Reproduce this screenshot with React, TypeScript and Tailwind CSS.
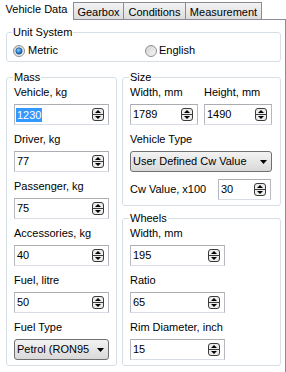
import React from "react";

const Spin = () => (
  <svg width="12" height="13" viewBox="0 0 12 13" className="shrink-0">
    <rect x="0.5" y="0.5" width="11" height="12" rx="2.5" fill="#ececec" stroke="#3a3a3a" />
    <line x1="0.5" y1="6.5" x2="11.5" y2="6.5" stroke="#3a3a3a" />
    <path d="M3 5 L9 5 L6 2 Z" fill="#000" />
    <path d="M3 8 L9 8 L6 11 Z" fill="#000" />
  </svg>
);

const Arrow = () => (
  <svg width="7" height="4" viewBox="0 0 7 4" className="shrink-0">
    <path d="M0 0 L7 0 L3.5 4 Z" fill="#000" />
  </svg>
);

const Radio = ({ checked, id }: { checked: boolean; id: string }) => (
  <svg width="12" height="12" viewBox="0 0 12 12" className="shrink-0">
    <defs>
      <linearGradient id={`g${id}`} x1="0" y1="0" x2="1" y2="1">
        <stop offset="0" stopColor="#cfcfcf" />
        <stop offset="1" stopColor="#fafafa" />
      </linearGradient>
      <radialGradient id={`b${id}`} cx="0.4" cy="0.35" r="0.7">
        <stop offset="0" stopColor="#8fd0ff" />
        <stop offset="0.6" stopColor="#2a84d8" />
        <stop offset="1" stopColor="#0c4f9a" />
      </radialGradient>
    </defs>
    <circle cx="6" cy="6" r="5.5" fill={`url(#g${id})`} stroke="#8e8f8f" />
    {checked && <circle cx="6" cy="6" r="3.2" fill={`url(#b${id})`} stroke="#1c4d80" strokeWidth="0.6" />}
  </svg>
);

const SpinBox = ({ value, w, selected }: { value: string; w: string; selected?: boolean }) => (
  <div
    className={`${w} h-[21px] flex items-center justify-between border border-[#b5b8bf] border-t-[#abadb3] border-b-[#d8dde5] bg-white pl-[1px] pr-[4px]`}
  >
    {selected ? (
      <span className="bg-[#3399ff] text-white px-[1px] leading-[14px]">{value}</span>
    ) : (
      <span className="px-[1px]">{value}</span>
    )}
    <Spin />
  </div>
);

const Combo = ({ value, w }: { value: string; w: string }) => (
  <div
    className={`${w} h-[21px] flex items-center border border-[#707070] rounded-[3px] bg-linear-to-b from-[#f3f3f3] to-[#d9d9d9] pl-[2px] pr-[4px]`}
  >
    <span className="flex-1 overflow-hidden whitespace-nowrap">{value}</span>
    <Arrow />
  </div>
);

const Field = ({
  label,
  value,
  w,
  first,
  selected,
}: {
  label: string;
  value: string;
  w: string;
  first?: boolean;
  selected?: boolean;
}) => (
  <div className={first ? "" : "mt-[8px]"}>
    <div className="h-[13px] whitespace-nowrap">{label}</div>
    <div className="mt-[5px]">
      <SpinBox value={value} w={w} selected={selected} />
    </div>
  </div>
);

const Group = ({ title, className, children }: { title: string; className: string; children: React.ReactNode }) => (
  <fieldset className={`border border-[#d5dfe5] rounded-[3px] ${className}`}>
    <legend className="ml-[6px] px-[1px] leading-[13px]">{title}</legend>
    {children}
  </fieldset>
);

export default function App() {
  return (
    <div className="w-[286px] h-[372px] overflow-hidden bg-white text-black text-[11px] leading-[13px] font-['Liberation_Sans',Arial,sans-serif]">
      {/* Tabs */}
      <div className="flex items-end h-[20px]">
        <div className="w-[73px] h-[20px] flex justify-center pt-[3px]">Vehicle Data</div>
        <div className="w-[51px] h-[18px] flex justify-center pt-[3px] border border-[#898c95] bg-linear-to-b from-[#f3f3f3] to-[#dcdcdc]">
          Gearbox
        </div>
        <div className="w-[62px] h-[18px] flex justify-center pt-[3px] border border-l-0 border-[#898c95] bg-linear-to-b from-[#f3f3f3] to-[#dcdcdc]">
          Conditions
        </div>
        <div className="w-[76px] h-[18px] flex justify-center pt-[3px] border border-l-0 border-[#898c95] bg-linear-to-b from-[#f3f3f3] to-[#dcdcdc]">
          Measurement
        </div>
        <div className="flex-1 h-[1px] bg-[#898c95]" />
      </div>

      {/* Pane */}
      <div className="h-[352px] border-r border-[#898c95] pt-[6px] pl-[6px] pr-[4px]">
        <fieldset className="border border-[#d5dfe5] rounded-[3px]">
          <legend className="ml-[5px] px-[1px] leading-[13px]">Unit System</legend>
          <div className="flex items-center h-[13px] mt-[5px] mb-[4px] pl-[6px]">
            <div className="w-[132px] flex items-center gap-[3px]">
              <Radio checked id="m" />
              <span>Metric</span>
            </div>
            <div className="flex items-center gap-[2px]">
              <Radio checked={false} id="e" />
              <span>English</span>
            </div>
          </div>
        </fieldset>

        <div className="flex items-start gap-[5px] mt-[9px]">
          <Group title="Mass" className="w-[111px]">
            <div className="pl-[7px] pt-[2px] pb-[5px]">
              <Field first label="Vehicle, kg" value="1230" w="w-[95px]" selected />
              <Field label="Driver, kg" value="77" w="w-[95px]" />
              <Field label="Passenger, kg" value="75" w="w-[95px]" />
              <Field label="Accessories, kg" value="40" w="w-[95px]" />
              <Field label="Fuel, litre" value="50" w="w-[95px]" />
              <div className="mt-[8px]">
                <div className="h-[13px]">Fuel Type</div>
                <div className="mt-[5px]">
                  <Combo value="Petrol (RON95" w="w-[95px]" />
                </div>
              </div>
            </div>
          </Group>

          <div className="w-[159px] flex flex-col">
            <Group title="Size" className="w-[159px]">
              <div className="pl-[7px] pt-[2px] pb-[5px]">
                <div className="flex gap-[6px]">
                  <Field first label="Width, mm" value="1789" w="w-[68px]" />
                  <Field first label="Height, mm" value="1490" w="w-[68px]" />
                </div>
                <div className="mt-[8px]">
                  <div className="h-[13px]">Vehicle Type</div>
                  <div className="mt-[5px]">
                    <Combo value="User Defined Cw Value" w="w-[142px]" />
                  </div>
                </div>
                <div className="flex items-center mt-[7px]">
                  <div className="w-[88px] whitespace-nowrap">Cw Value, x100</div>
                  <SpinBox value="30" w="w-[53px]" />
                </div>
              </div>
            </Group>

            <Group title="Wheels" className="w-[159px] mt-[6px]">
              <div className="pl-[7px] pt-[2px] pb-[5px]">
                <Field first label="Width, mm" value="195" w="w-[95px]" />
                <Field label="Ratio" value="65" w="w-[95px]" />
                <Field label="Rim Diameter, inch" value="15" w="w-[95px]" />
              </div>
            </Group>
          </div>
        </div>
      </div>
    </div>
  );
}
